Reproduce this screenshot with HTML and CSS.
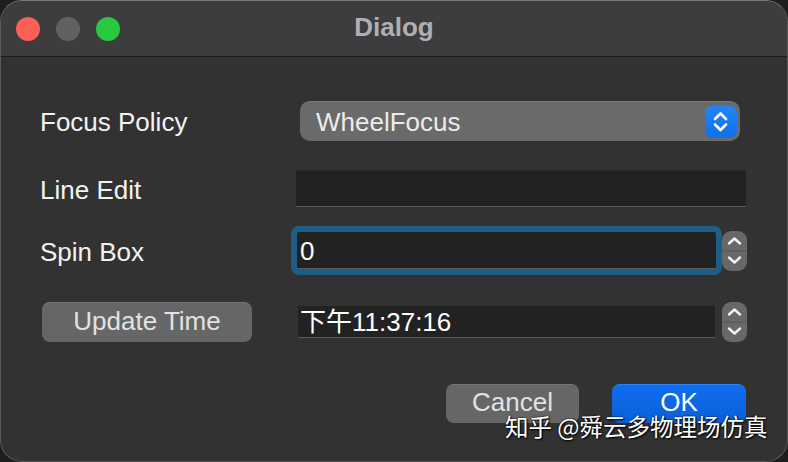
FILE: index.html
```html
<!DOCTYPE html>
<html lang="en">
<head>
    <meta charset="UTF-8">
    <title>Dialog</title>
    <link rel="stylesheet" href="styles.css">
</head>
<body>

    <div class="window">
        <!-- Title bar -->
        <div class="titlebar">
            <div class="lights">
                <span class="light red"></span>
                <span class="light grey"></span>
                <span class="light green"></span>
            </div>
            <div class="title">Dialog</div>
            <div></div>
        </div>

        <div class="content">
            <div class="row row-combo">
                <div class="label">Focus Policy</div>
                <div class="combo">
                    <span class="combo-text">WheelFocus</span>
                    <span class="combo-arrow">
                        <svg width="32" height="32" viewBox="0 0 32 32">
                            <path d="M10 13 L15.5 7.5 L21 13" fill="none" stroke="#fff" stroke-width="2.6" stroke-linecap="round" stroke-linejoin="round"/>
                            <path d="M10 18.5 L15.5 24 L21 18.5" fill="none" stroke="#fff" stroke-width="2.6" stroke-linecap="round" stroke-linejoin="round"/>
                        </svg>
                    </span>
                </div>
            </div>

            <div class="row row-line">
                <div class="label">Line Edit</div>
                <div class="line-edit"></div>
            </div>

            <div class="row row-spin">
                <div class="label">Spin Box</div>
                <div class="focus-ring">
                    <div class="field">0</div>
                </div>
                <div class="stepper">
                    <svg width="25" height="40" viewBox="0 0 25 40">
                        <path d="M7 12.5 L12.5 7.5 L18 12.5" fill="none" stroke="#f2f2f2" stroke-width="2.4" stroke-linecap="round" stroke-linejoin="round"/>
                        <line x1="0" y1="20" x2="25" y2="20" stroke="#555" stroke-width="1"/>
                        <path d="M7 26.5 L12.5 31.5 L18 26.5" fill="none" stroke="#f2f2f2" stroke-width="2.4" stroke-linecap="round" stroke-linejoin="round"/>
                    </svg>
                </div>
            </div>

            <div class="row row-time">
                <div class="label">
                    <button class="btn update-btn">Update Time</button>
                </div>
                <div class="time-edit">下午11:37:16</div>
                <div class="stepper">
                    <svg width="25" height="40" viewBox="0 0 25 40">
                        <path d="M7 12.5 L12.5 7.5 L18 12.5" fill="none" stroke="#f2f2f2" stroke-width="2.4" stroke-linecap="round" stroke-linejoin="round"/>
                        <line x1="0" y1="20" x2="25" y2="20" stroke="#555" stroke-width="1"/>
                        <path d="M7 26.5 L12.5 31.5 L18 26.5" fill="none" stroke="#f2f2f2" stroke-width="2.4" stroke-linecap="round" stroke-linejoin="round"/>
                    </svg>
                </div>
            </div>

            <div class="actions">
                <button class="btn cancel-btn">Cancel</button>
                <button class="btn ok-btn">OK</button>
            </div>
        </div>

        <!-- Watermark over the buttons -->
        <div class="watermark">知乎 @舜云多物理场仿真</div>
    </div>

</body>
</html>
```

FILE: styles.css
```css
* {
    box-sizing: border-box;
    margin: 0;
    padding: 0;
}

body {
    width: 788px;
    height: 462px;
    background-color: #1e1e1e;
    font-family: "Liberation Sans", "Noto Sans CJK SC", sans-serif;
    overflow: hidden;
}

.window {
    position: relative;
    width: 788px;
    height: 462px;
    background-color: #323232;
    border: 1px solid #5a5a5a;
    border-top-color: #7a7a7a;
    border-radius: 22px;
    overflow: hidden;
    color: #f0f0f0;
}

.titlebar {
    height: 56px;
    display: grid;
    grid-template-columns: 1fr auto 1fr;
    align-items: center;
    background-color: #3d3d3f;
    border-bottom: 1px solid #1c1c1c;
}

.lights {
    display: flex;
    gap: 16px;
    padding-left: 15px;
}

.light {
    width: 24px;
    height: 24px;
    border-radius: 50%;
}

.red {
    background-color: #fe5f57;
}

.grey {
    background-color: #616164;
}

.green {
    background-color: #28c840;
}

.title {
    font-size: 26px;
    font-weight: bold;
    color: #b0b0b0;
    padding-bottom: 2px;
}

.content {
    padding-left: 39px;
}

.row {
    display: flex;
    align-items: center;
}

.label {
    width: 251px;
    flex-shrink: 0;
    font-size: 26px;
    color: #f2f2f2;
    padding-top: 3px;
}

.row-combo {
    margin-top: 44px;
    height: 40px;
}

.combo {
    margin-left: 9px;
    width: 440px;
    height: 40px;
    background-color: #6a6a6a;
    border-radius: 10px;
    border-top: 1px solid #7a7a7a;
    display: flex;
    align-items: center;
    justify-content: space-between;
    padding: 0 3px 0 16px;
}

.combo-text {
    font-size: 26px;
    color: #ececec;
    padding-top: 2px;
}

.combo-arrow {
    width: 32px;
    height: 32px;
    border-radius: 7px;
    background: linear-gradient(#2384f7, #1170ea);
    display: flex;
}

.row-line {
    margin-top: 29px;
    height: 37px;
}

.line-edit {
    margin-left: 5px;
    width: 450px;
    height: 37px;
    background-color: #222222;
    border-top: 1px solid #2a2a2a;
    border-bottom: 1px solid #5a5a5a;
}

.row-spin {
    margin-top: 19px;
    height: 49px;
}

.focus-ring {
    width: 431px;
    height: 49px;
    border: 6px solid #1f5d86;
    border-radius: 8px;
    background-color: #222222;
}

.field {
    height: 100%;
    border-bottom: 1px solid #5a5a5a;
    font-size: 26px;
    line-height: 38px;
    padding-left: 3px;
    color: #ffffff;
}

.stepper {
    width: 25px;
    height: 40px;
    border-radius: 9px;
    background-color: #686868;
    display: flex;
}

.row-time {
    margin-top: 26px;
    height: 41px;
}

.row-time .label {
    padding-top: 0;
}

.row-time .stepper {
    margin-left: 7px;
}

.time-edit {
    margin-left: 7px;
    width: 417px;
    height: 32px;
    background-color: #222222;
    border-bottom: 1px solid #5a5a5a;
    font-size: 26px;
    line-height: 32px;
    padding-left: 2px;
    color: #ffffff;
}

.btn {
    font-family: "Liberation Sans", sans-serif;
    font-size: 26px;
    border: none;
    border-radius: 8px;
    height: 40px;
    color: #e2e2e2;
    background-color: #666666;
    border-top: 1px solid #767676;
}

.update-btn {
    margin-left: 2px;
    width: 210px;
    padding-bottom: 2px;
}

.actions {
    margin-top: 42px;
    padding-right: 41px;
    display: flex;
    justify-content: flex-end;
    gap: 33px;
}

.cancel-btn {
    width: 133px;
    height: 39px;
    padding-bottom: 3px;
}

.ok-btn {
    width: 134px;
    height: 39px;
    padding-bottom: 3px;
    color: #ffffff;
    background: linear-gradient(#0f6df0, #0a60d6);
    border-top: 1px solid #2a82f5;
}

.watermark {
    position: absolute;
    left: 504px;
    top: 408px;
    font-family: "Noto Sans CJK SC", sans-serif;
    font-size: 23.5px;
    color: #ffffff;
    text-shadow: 0 0 2px #000, 1px 1px 2px #000;
    white-space: nowrap;
}
```
